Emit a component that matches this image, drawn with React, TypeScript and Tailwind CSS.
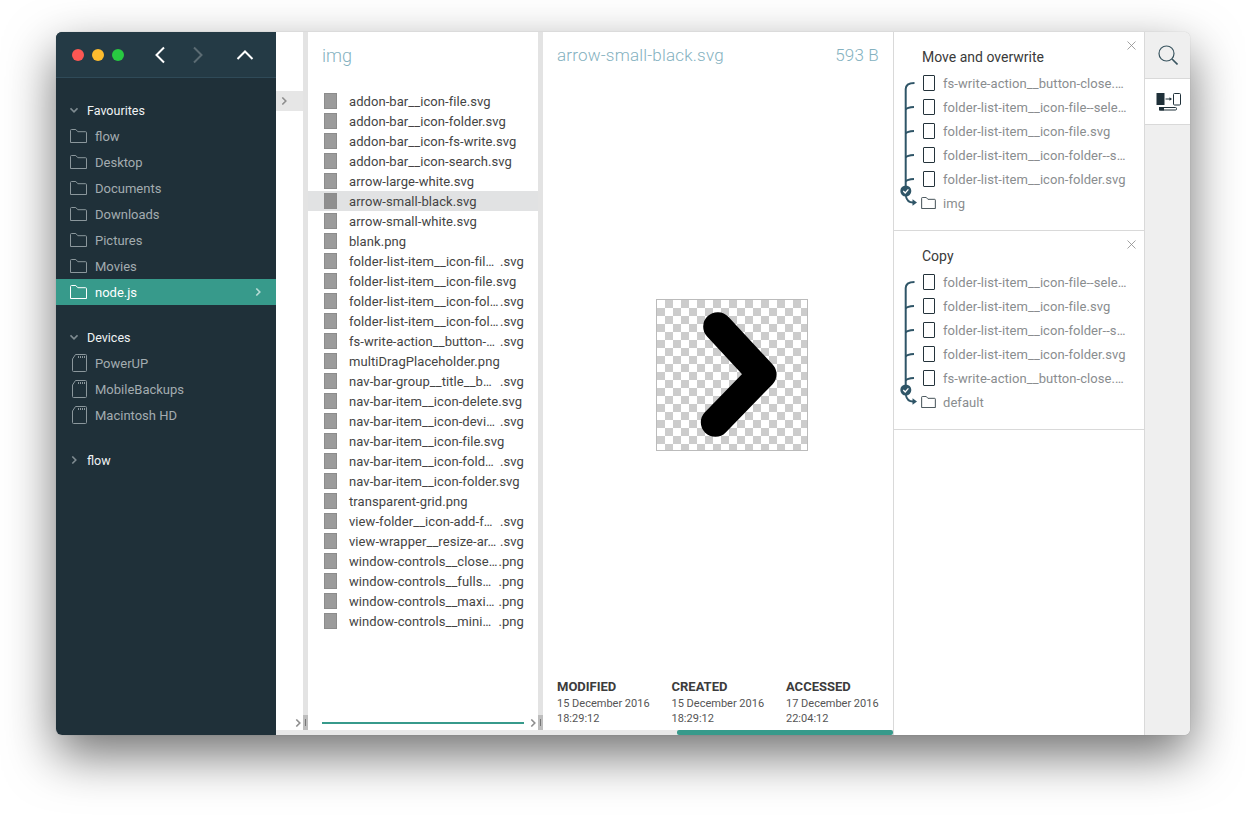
import React from "react";

const files: [string, string?][] = [
  ["addon-bar__icon-file.svg"],
  ["addon-bar__icon-folder.svg"],
  ["addon-bar__icon-fs-write.svg"],
  ["addon-bar__icon-search.svg"],
  ["arrow-large-white.svg"],
  ["arrow-small-black.svg"],
  ["arrow-small-white.svg"],
  ["blank.png"],
  ["folder-list-item__icon-fil…", ".svg"],
  ["folder-list-item__icon-file.svg"],
  ["folder-list-item__icon-fol…", ".svg"],
  ["folder-list-item__icon-fol…", ".svg"],
  ["fs-write-action__button-…", ".svg"],
  ["multiDragPlaceholder.png"],
  ["nav-bar-group__title__b…", ".svg"],
  ["nav-bar-item__icon-delete.svg"],
  ["nav-bar-item__icon-devi…", ".svg"],
  ["nav-bar-item__icon-file.svg"],
  ["nav-bar-item__icon-fold…", ".svg"],
  ["nav-bar-item__icon-folder.svg"],
  ["transparent-grid.png"],
  ["view-folder__icon-add-f…", ".svg"],
  ["view-wrapper__resize-ar…", ".svg"],
  ["window-controls__close…", ".png"],
  ["window-controls__fulls…", ".png"],
  ["window-controls__maxi…", ".png"],
  ["window-controls__mini…", ".png"],
];

function FolderIcon({ color = "#8b979c", w = 17, h = 14 }: { color?: string; w?: number; h?: number }) {
  return (
    <svg width={w} height={h} viewBox="0 0 17 14" fill="none" stroke={color} strokeWidth="1" className="shrink-0">
      <path d="M.5 13.5V1.5a1 1 0 0 1 1-1h4.3l2 2.2h7.7a1 1 0 0 1 1 1v9.8z" strokeLinejoin="round" />
    </svg>
  );
}

function DeviceIcon() {
  return (
    <svg width="15" height="18" viewBox="0 0 15 18" fill="none" stroke="#8b979c" strokeWidth="1" className="shrink-0">
      <path d="M.5 5 3.5.5h10a1 1 0 0 1 1 1v15a1 1 0 0 1-1 1h-12a1 1 0 0 1-1-1z" strokeLinejoin="round" />
      <path d="M6.5 2v2M8.5 2v2M10.5 2v2M12.5 2v2" />
    </svg>
  );
}

function Caret({ open, color = "#7f8b91" }: { open?: boolean; color?: string }) {
  return (
    <svg width="8" height="8" viewBox="0 0 8 8" fill="none" stroke={color} strokeWidth="1.6" className="shrink-0">
      {open ? <path d="M.5 2.3 4 5.8l3.5-3.5" /> : <path d="M2.3.5 5.8 4 2.3 7.5" />}
    </svg>
  );
}

function SidebarItem({ label, active, device }: { label: string; active?: boolean; device?: boolean }) {
  return (
    <div className={`flex h-[26px] items-center text-[13px] ${active ? "bg-[#379a8b] text-white" : "text-[#a3acb0]"}`}>
      <div className="flex w-[39px] justify-end pr-[4px] pl-[14px]">
        <div className={`flex w-[21px] ${device ? "pl-[2px]" : ""}`}>
          {device ? <DeviceIcon /> : <FolderIcon color={active ? "#ffffff" : "#8b979c"} />}
        </div>
      </div>
      <span className="pt-[2px]">{label}</span>
      {active && (
        <div className="mr-[14px] ml-auto">
          <Caret color="#b9dcd6" />
        </div>
      )}
    </div>
  );
}

function SectionLabel({ label, open = true }: { label: string; open?: boolean }) {
  return (
    <div className="flex h-[26px] items-center gap-[9px] pl-[14px] text-[#f0f3f4]">
      <Caret open={open} />
      <span className="pt-[2px] text-[12.5px]">{label}</span>
    </div>
  );
}

function Gutter() {
  return (
    <div className="flex w-[5px] shrink-0 flex-col justify-end bg-[#e3e3e3]">
      <div className="flex h-[15px] items-center justify-center bg-[#bdbdbd]">
        <div className="h-[7px] w-px bg-[#777777]" />
      </div>
    </div>
  );
}

function FileRow({ name, ext, selected }: { name: string; ext?: string; selected?: boolean }) {
  return (
    <div className={`flex h-5 items-center pr-[14px] pl-[16px] text-[13px] tracking-[0.07px] text-[#444444] ${selected ? "bg-[#e1e2e3]" : ""}`}>
      <div className={`mr-[12px] h-[16px] w-[13px] shrink-0 border border-[#8c8c8c] ${selected ? "bg-[#8f8f8f]" : "bg-[#9b9b9b]"}`} />
      <span className="pt-[2px] whitespace-nowrap">{name}</span>
      {ext && <span className="ml-auto pt-[2px]">{ext}</span>}
    </div>
  );
}

function Bracket() {
  const ticks = [36, 60, 84, 108];
  return (
    <svg width="22" height="144" viewBox="0 0 22 144" fill="none" className="shrink-0 overflow-visible" stroke="#2f5567">
      <path d="M3.7 118V18Q3.7 12 12.5 11.9" strokeWidth="2" />
      {ticks.map((y) => (
        <path key={y} d={`M3.7 ${y + 2.5}Q5 ${y + 0.3} 12 ${y}`} strokeWidth="1.8" />
      ))}
      <circle cx="3.8" cy="120" r="5.5" fill="#2f5567" stroke="none" />
      <path d="M1.3 120 3.2 122 6.4 118.4" stroke="#ffffff" strokeWidth="1.3" />
      <path d="M3.8 125Q5 131.5 11 131.5" strokeWidth="1.8" />
      <path d="M10.5 128.3 15 131.5 10.5 134.7z" fill="#2f5567" stroke="none" />
    </svg>
  );
}

function TaskSection({ title, items, target }: { title: string; items: string[]; target: string }) {
  return (
    <section className="relative flex h-[199px] flex-col border-b border-[#d9d9d9]">
      <svg width="9" height="9" viewBox="0 0 9 9" stroke="#8a8a8a" strokeWidth="0.8" className="absolute top-[9px] right-[8px]">
        <path d="M.5.5l8 8M8.5.5l-8 8" />
      </svg>
      <div className="flex h-[39px] items-end pb-[4px] pl-[28px] text-[14px] leading-5 text-[#3a3a3a]">{title}</div>
      <div className="flex pl-[8px]">
        <Bracket />
        <div className="-ml-[1px] flex min-w-0 flex-col">
          {items.map((f) => (
            <div key={f} className="flex h-6 items-center text-[13px] tracking-[0.07px] whitespace-nowrap text-[#8a8d8f]">
              <div className="mr-[8px] h-[16px] w-[12px] shrink-0 rounded-[1px] border border-[#24333b]" />
              <span className="pt-[1px]">{f}</span>
            </div>
          ))}
          <div className="-ml-[2px] flex h-6 items-center text-[13px] tracking-[0.07px] text-[#8a8d8f]">
            <div className="mr-[7px] flex">
              <FolderIcon color="#24333b" w={15} h={12} />
            </div>
            <span className="pt-[1px]">{target}</span>
          </div>
        </div>
      </div>
    </section>
  );
}

function Meta({ title, date, time }: { title: string; date: string; time: string }) {
  return (
    <div className="-mt-[1px] w-[114.5px] shrink-0">
      <div className="text-[13px] leading-[15px] font-bold text-[#3c3c3c]">{title}</div>
      <div className="mt-[2px] text-[11px] leading-[15px] text-[#555555]">{date}</div>
      <div className="text-[11px] leading-[15px] text-[#555555]">{time}</div>
    </div>
  );
}

export default function App() {
  return (
    <div className="h-screen overflow-hidden bg-white pt-[32px] pl-[56px] font-['Roboto',sans-serif]">
      <div className="flex h-[703px] w-[1134px] overflow-hidden rounded-[6px] bg-white shadow-[0_20px_50px_rgba(0,0,0,0.56),0_0_1px_rgba(0,0,0,0.3)]">
        {/* Sidebar */}
        <aside className="flex w-[220px] shrink-0 flex-col bg-[#1f3039]">
          <div className="flex h-[46px] shrink-0 items-center border-b border-[#2f4a58] bg-[#243a45]">
            <div className="ml-[16px] flex gap-[8px]">
              <div className="h-3 w-3 rounded-full bg-[#fc5753]" />
              <div className="h-3 w-3 rounded-full bg-[#fdbc2e]" />
              <div className="h-3 w-3 rounded-full bg-[#28c941]" />
            </div>
            <svg width="12" height="18" viewBox="0 0 12 18" fill="none" stroke="#ffffff" strokeWidth="2" className="ml-[30px]">
              <path d="M10 1.5 2.5 9l7.5 7.5" />
            </svg>
            <svg width="12" height="18" viewBox="0 0 12 18" fill="none" stroke="#5b6b73" strokeWidth="2" className="ml-[26px]">
              <path d="M2 1.5 9.5 9 2 16.5" />
            </svg>
            <svg width="18" height="12" viewBox="0 0 18 12" fill="none" stroke="#ffffff" strokeWidth="2" className="ml-[32px]">
              <path d="M1.5 10 9 2.5l7.5 7.5" />
            </svg>
          </div>
          <div className="h-[19px] shrink-0" />
          <SectionLabel label="Favourites" />
          {["flow", "Desktop", "Documents", "Downloads", "Pictures", "Movies"].map((l) => (
            <SidebarItem key={l} label={l} />
          ))}
          <SidebarItem label="node.js" active />
          <div className="h-[19px] shrink-0" />
          <SectionLabel label="Devices" />
          {["PowerUP", "MobileBackups", "Macintosh HD"].map((l) => (
            <SidebarItem key={l} label={l} device />
          ))}
          <div className="h-[19px] shrink-0" />
          <SectionLabel label="flow" open={false} />
        </aside>

        {/* Views */}
        <div className="flex w-[617px] shrink-0 flex-col">
          <div className="flex min-h-0 flex-1">
            <div className="flex w-[27px] shrink-0 flex-col pt-[59px]">
              <div className="flex h-5 items-center justify-end bg-[#e6e6e6] pr-[15px]">
                <Caret color="#8e8e8e" />
              </div>
              <div className="mt-auto flex h-[15px] items-center justify-end pr-[1px]">
                <Caret color="#8e8e8e" />
              </div>
            </div>
            <Gutter />
            <div className="flex w-[230px] shrink-0 flex-col">
              <div className="flex h-[46px] items-center pl-[14px] text-[18px] font-light text-[#84b1c0]">img</div>
              <div className="mt-[13px] flex flex-col">
                {files.map(([n, e], i) => (
                  <FileRow key={i} name={n} ext={e} selected={i === 5} />
                ))}
              </div>
              <div className="mt-auto flex h-[15px] items-center pr-[1px] pl-[14px]">
                <div className="h-[2px] w-[202px] bg-[#379a8b]" />
                <div className="ml-auto">
                  <Caret color="#8e8e8e" />
                </div>
              </div>
            </div>
            <Gutter />
            <div className="flex w-[350px] shrink-0 flex-col">
              <div className="flex h-[48px] items-center justify-between px-[14px] text-[17px] font-light tracking-[0.2px] text-[#84b1c0]">
                <span>arrow-small-black.svg</span>
                <span>593 B</span>
              </div>
              <div className="flex min-h-0 flex-1 items-center justify-center pt-[2px] pb-[12px] pl-[28px]">
                <div className="h-[152px] w-[152px] border border-[#bbbbbb] bg-[conic-gradient(#cccccc_25%,#ffffff_0_50%,#cccccc_0_75%,#ffffff_0)] bg-[length:16px_16px]">
                  <svg width="150" height="150" viewBox="1 1 150 150" fill="none" stroke="#000000" strokeWidth="29" strokeLinecap="round" strokeLinejoin="round">
                    <path d="M61.7 27.7 106 75.3 59.3 123.3" />
                  </svg>
                </div>
              </div>
              <div className="flex h-[50px] shrink-0 pl-[14px]">
                <Meta title="MODIFIED" date="15 December 2016" time="18:29:12" />
                <Meta title="CREATED" date="15 December 2016" time="18:29:12" />
                <Meta title="ACCESSED" date="17 December 2016" time="22:04:12" />
              </div>
            </div>
          </div>
          <div className="flex h-[5px] shrink-0 bg-[#e8e8e8]">
            <div className="w-[401px]" />
            <div className="flex-1 rounded-[2px] bg-[#379a8b]" />
          </div>
        </div>

        {/* Task panel */}
        <div className="flex w-[252px] shrink-0 flex-col border-r border-l border-[#d9d9d9]">
          <TaskSection
            title="Move and overwrite"
            items={[
              "fs-write-action__button-close.…",
              "folder-list-item__icon-file--sele…",
              "folder-list-item__icon-file.svg",
              "folder-list-item__icon-folder--s…",
              "folder-list-item__icon-folder.svg",
            ]}
            target="img"
          />
          <TaskSection
            title="Copy"
            items={[
              "folder-list-item__icon-file--sele…",
              "folder-list-item__icon-file.svg",
              "folder-list-item__icon-folder--s…",
              "folder-list-item__icon-folder.svg",
              "fs-write-action__button-close.…",
            ]}
            target="default"
          />
        </div>

        {/* Tabs */}
        <div className="flex flex-1 flex-col">
          <div className="flex h-[47px] items-center justify-center border-b border-[#d9d9d9] bg-[#efefef]">
            <svg width="20" height="20" viewBox="0 0 20 20" fill="none" stroke="#3a5560" strokeWidth="1.2">
              <circle cx="8.5" cy="8.5" r="7.5" />
              <path d="M14 14l5.5 5.5" strokeWidth="1.6" />
            </svg>
          </div>
          <div className="flex h-[45px] items-center justify-center pl-[2px]">
            <svg width="26" height="18" viewBox="0 0 26 18">
              <rect x="0.5" y="0" width="8" height="12" fill="#1f3039" />
              <path d="M9.5 6h5" stroke="#1f3039" strokeWidth="1" />
              <path d="M13.5 4.3 16 6l-2.5 1.7z" fill="#1f3039" />
              <rect x="17.5" y="0.5" width="7" height="11.5" rx="1" fill="none" stroke="#1f3039" />
              <rect x="3.5" y="14.5" width="17" height="2.5" rx="1" fill="#ffffff" stroke="#1f3039" />
              <rect x="3" y="14" width="5" height="3.5" fill="#1f3039" />
            </svg>
          </div>
          <div className="flex-1 border-t border-[#d9d9d9] bg-[#efefef]" />
        </div>
      </div>
    </div>
  );
}
